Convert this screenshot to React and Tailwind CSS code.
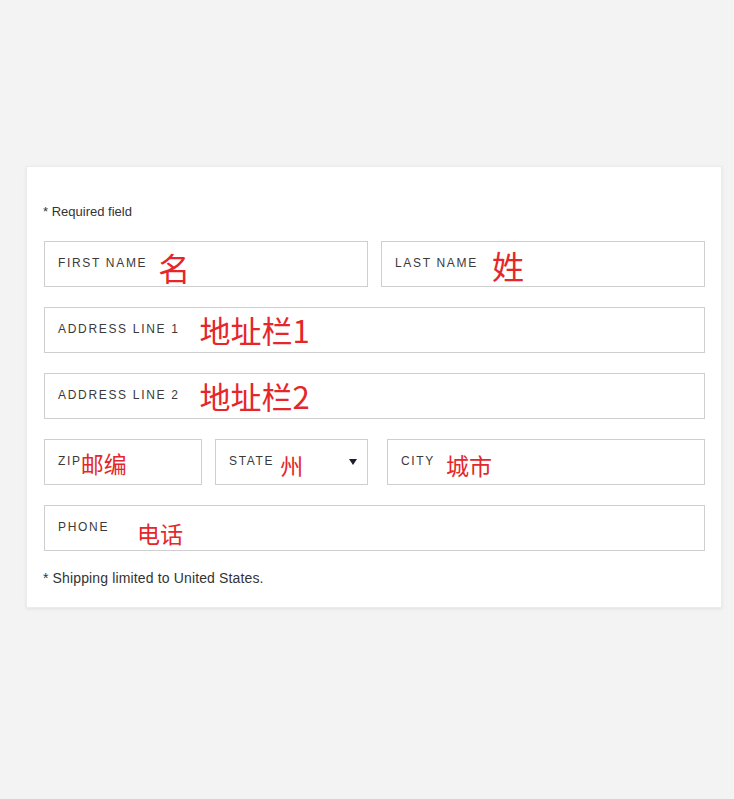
import React from 'react';

const sans = { fontFamily: '"Liberation Sans", Arial, sans-serif' };
const cjk = { fontFamily: '"Noto Sans CJK SC", "Noto Sans", sans-serif' };

function Field({ label, note, noteClass, className = '', children }) {
  return (
    <div className={`h-[46px] border border-[#cfcfcf] bg-white flex items-center pl-[13px] ${className}`}>
      <span className="text-[12px] leading-[14px] tracking-[0.14em] text-[#3a3a3a] -mt-[3px] whitespace-nowrap" style={sans}>{label}</span>
      {note && <span className={`text-[#e5262a] whitespace-nowrap ${noteClass}`} style={cjk}>{note}</span>}
      {children}
    </div>
  );
}

export default function App() {
  return (
    <div className="min-h-[799px] bg-[#f3f3f3] pt-[166px] pl-[26px] pr-[12px]">
      <div className="bg-white w-[696px] border border-[#ececec] shadow-[0_1px_3px_rgba(0,0,0,0.08)] pt-[37px] pb-[20px] pl-[17px] pr-[16px]" style={sans}>
        <p className="text-[13px] leading-[16px] text-[#333] mb-[21px] -ml-[1px]">* Required field</p>

        <div className="flex flex-col gap-[20px]">
          <div className="flex gap-[13px]">
            <Field label="FIRST NAME" note="名" noteClass="text-[32px] leading-[36px] ml-[11px] mt-[6px]" className="w-[324px]" />
            <Field label="LAST NAME" note="姓" noteClass="text-[32px] leading-[36px] ml-[14px] mt-[2px]" className="w-[324px]" />
          </div>
          <Field label="ADDRESS LINE 1" note="地址栏1" noteClass="text-[31px] leading-[36px] ml-[20px]" />
          <Field label="ADDRESS LINE 2" note="地址栏2" noteClass="text-[31px] leading-[36px] ml-[20px]" />
          <div className="flex">
            <Field label="ZIP" note="邮编" noteClass="text-[23px] leading-[26px] -ml-[1px] mt-[2px]" className="w-[158px]" />
            <Field label="STATE" note="州" noteClass="text-[23px] leading-[26px] ml-[6px] mt-[6px]" className="w-[153px] ml-[13px] pr-[10px]">
              <span className="ml-auto w-0 h-0 border-l-[4px] border-r-[4px] border-t-[6px] border-l-transparent border-r-transparent border-t-[#1b1e2b]" />
            </Field>
            <Field label="CITY" note="城市" noteClass="text-[23px] leading-[26px] ml-[11px] mt-[6px]" className="flex-1 ml-[19px]" />
          </div>
          <Field label="PHONE" note="电话" noteClass="text-[23px] leading-[26px] ml-[28px] mt-[10px]" />
        </div>

        <p className="text-[14px] leading-[18px] text-[#333] mt-[18px] -ml-[1px] tracking-[0.01em]">* Shipping limited to United States.</p>
      </div>
    </div>
  );
}
